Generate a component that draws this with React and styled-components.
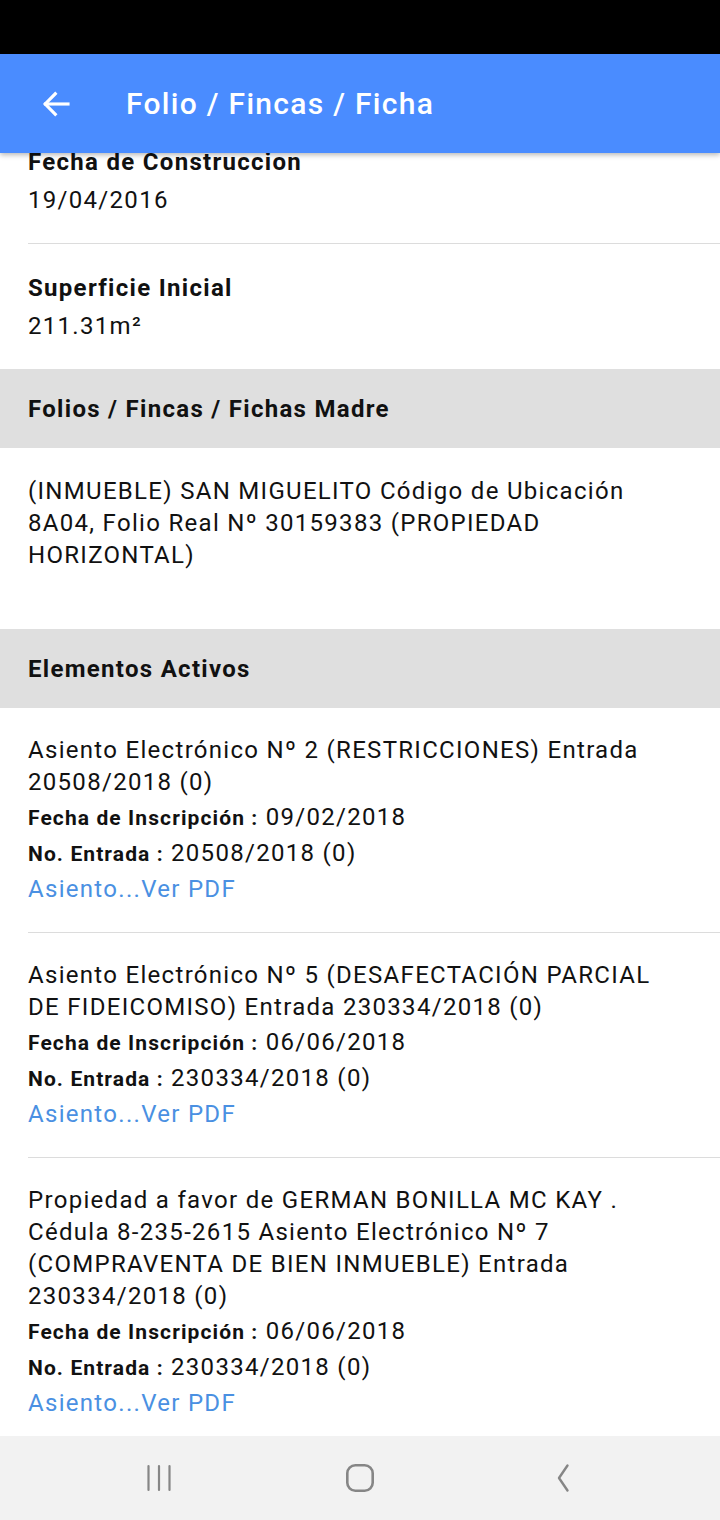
import React from "react";
import styled, { createGlobalStyle } from "styled-components";

const Global = createGlobalStyle`
  html, body { margin: 0; padding: 0; background: #fff; }
  body { font-family: Roboto, "Noto Sans", sans-serif; color: #111; }
  * { box-sizing: border-box; }
`;

const Screen = styled.div`
  width: 720px;
  height: 1520px;
  display: flex;
  flex-direction: column;
  overflow: hidden;
  background: #fff;
`;

const StatusBar = styled.div`
  height: 54px;
  flex: none;
  background: #000;
`;

const AppBar = styled.header`
  height: 99px;
  flex: none;
  background: #4a8cff;
  display: flex;
  align-items: center;
  padding-left: 38px;
  gap: 52px;
  position: relative;
  z-index: 2;
  box-shadow: 0 2px 5px rgba(0, 0, 0, 0.28);
`;

const Title = styled.h1`
  margin: 0;
  color: #fff;
  font-size: 30px;
  font-weight: 500;
  letter-spacing: 1.3px;
`;

const Scroll = styled.main`
  flex: 1;
  overflow: hidden;
  margin-top: -35px;
  position: relative;
  z-index: 1;
  letter-spacing: 1.3px;
`;

const Field = styled.div`
  margin-left: 28px;
  padding: 27px 0 26px 0;
  display: flex;
  flex-direction: column;
  gap: 4px;
  ${(p) => p.$divider && `border-bottom: 1px solid #dcdcdc;`}
`;

const Label = styled.div`
  font-size: 24px;
  font-weight: 700;
  line-height: 34px;
`;

const Value = styled.div`
  font-size: 24px;
  line-height: 34px;
`;

const SectionHeader = styled.div`
  height: 79px;
  background: #dfdfdf;
  display: flex;
  align-items: center;
  padding-left: 28px;
  font-size: 24px;
  font-weight: 700;
`;

const Paragraph = styled.p`
  margin: 0;
  padding: 27px 40px 58px 28px;
  font-size: 24px;
  line-height: 32px;
`;

const Entry = styled.div`
  margin-left: 28px;
  padding: 26px 40px 25px 0;
  ${(p) => p.$divider && `border-bottom: 1px solid #dcdcdc;`}
`;

const EntryText = styled.div`
  font-size: 24px;
  line-height: 32px;
  margin-bottom: 2px;
`;

const Meta = styled.div`
  font-size: 24px;
  line-height: 35px;
`;

const MetaLabel = styled.b`
  font-size: 21px;
  font-weight: 700;
  letter-spacing: 1.1px;
`;

const Link = styled.a`
  display: block;
  font-size: 24px;
  line-height: 35px;
  color: #4a90e2;
  text-decoration: none;
`;

const NavBar = styled.nav`
  height: 84px;
  flex: none;
  background: #f2f2f2;
  display: flex;
  align-items: center;
  justify-content: center;
  gap: 141px;
`;

const NavButton = styled.div`
  width: 60px;
  height: 40px;
  display: flex;
  align-items: center;
  justify-content: center;
`;

const BackArrow = () => (
  <svg width="36" height="36" viewBox="0 0 24 24" fill="none" stroke="#fff" strokeWidth="2.1" strokeLinecap="square">
    <path d="M20 12H5" />
    <path d="M11.5 5.2L4.8 12l6.7 6.8" />
  </svg>
);

const entries = [
  {
    text: "Asiento Electrónico Nº 2 (RESTRICCIONES) Entrada 20508/2018 (0)",
    fecha: "09/02/2018",
    entrada: "20508/2018 (0)",
  },
  {
    text: "Asiento Electrónico Nº 5 (DESAFECTACIÓN PARCIAL DE FIDEICOMISO) Entrada 230334/2018 (0)",
    fecha: "06/06/2018",
    entrada: "230334/2018 (0)",
  },
  {
    text: "Propiedad a favor de GERMAN BONILLA MC KAY . Cédula 8-235-2615 Asiento Electrónico Nº 7 (COMPRAVENTA DE BIEN INMUEBLE) Entrada 230334/2018 (0)",
    fecha: "06/06/2018",
    entrada: "230334/2018 (0)",
  },
];

export default function App() {
  return (
    <Screen>
      <Global />
      <StatusBar />
      <AppBar>
        <BackArrow />
        <Title>Folio / Fincas / Ficha</Title>
      </AppBar>
      <Scroll>
        <Field $divider>
          <Label>Fecha de Construccion</Label>
          <Value>19/04/2016</Value>
        </Field>
        <Field>
          <Label>Superficie Inicial</Label>
          <Value>211.31m²</Value>
        </Field>
        <SectionHeader>Folios / Fincas / Fichas Madre</SectionHeader>
        <Paragraph>
          (INMUEBLE) SAN MIGUELITO Código de Ubicación 8A04, Folio Real Nº 30159383 (PROPIEDAD HORIZONTAL)
        </Paragraph>
        <SectionHeader>Elementos Activos</SectionHeader>
        {entries.map((e, i) => (
          <Entry key={i} $divider={i < entries.length - 1}>
            <EntryText>{e.text}</EntryText>
            <Meta>
              <MetaLabel>Fecha de Inscripción :</MetaLabel> {e.fecha}
            </Meta>
            <Meta>
              <MetaLabel>No. Entrada :</MetaLabel> {e.entrada}
            </Meta>
            <Link href="#">Asiento...Ver PDF</Link>
          </Entry>
        ))}
      </Scroll>
      <NavBar>
        <NavButton>
          <svg width="30" height="30" viewBox="0 0 30 30" fill="none" stroke="#868686" strokeWidth="2.2" strokeLinecap="round">
            <path d="M4.5 3v24M15 3v24M25.5 3v24" />
          </svg>
        </NavButton>
        <NavButton>
          <svg width="30" height="30" viewBox="0 0 30 30" fill="none" stroke="#868686" strokeWidth="2.6">
            <rect x="2.3" y="2.3" width="25.4" height="25.4" rx="8" />
          </svg>
        </NavButton>
        <NavButton>
          <svg width="30" height="30" viewBox="0 0 30 30" fill="none" stroke="#868686" strokeWidth="2.4" strokeLinecap="round" strokeLinejoin="round">
            <path d="M21.5 2.5L13 15l8.5 12.5" />
          </svg>
        </NavButton>
      </NavBar>
    </Screen>
  );
}
